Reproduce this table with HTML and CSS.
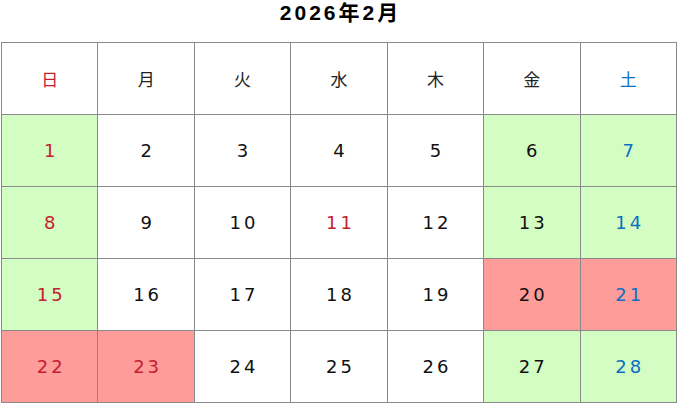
FILE: index.html
```html
<!DOCTYPE html>
<html lang="ja">
<head>
<meta charset="utf-8">
<link rel="stylesheet" href="styles.css">
</head>
<body>
<div class="cal">
  <h1 class="title">2026年2月</h1>
  <table class="grid">
    <thead>
      <tr>
        <th class="sun">日</th><th>月</th><th>火</th><th>水</th><th>木</th><th>金</th><th class="sat">土</th>
      </tr>
    </thead>
    <tbody>
      <tr>
        <td class="sun green">1</td><td>2</td><td>3</td><td>4</td><td>5</td><td class="green">6</td><td class="sat green">7</td>
      </tr>
      <tr>
        <td class="sun green">8</td><td>9</td><td>10</td><td class="sun">11</td><td>12</td><td class="green">13</td><td class="sat green">14</td>
      </tr>
      <tr>
        <td class="sun green">15</td><td>16</td><td>17</td><td>18</td><td>19</td><td class="red">20</td><td class="sat red">21</td>
      </tr>
      <tr>
        <td class="sun red">22</td><td class="sun red">23</td><td>24</td><td>25</td><td>26</td><td class="green">27</td><td class="sat green">28</td>
      </tr>
    </tbody>
  </table>
</div>
</body>
</html>
```

FILE: styles.css
```css
html, body {
  margin: 0;
  padding: 0;
  background: #fff;
}
.cal {
  padding: 0 0 0 1px;
  width: 676px;
}
.title {
  margin: 0;
  height: 42px;
  padding-top: 1px;
  box-sizing: border-box;
  text-align: center;
  font-family: "Liberation Sans", "Noto Sans CJK JP", sans-serif;
  font-weight: bold;
  font-size: 21px;
  line-height: 24px;
  letter-spacing: 3px;
  text-indent: 3px;
  color: #000;
}
.grid {
  width: 676px;
  border-collapse: collapse;
  table-layout: fixed;
}
.grid th, .grid td {
  border: 1px solid #8a8a8a;
  height: 71px;
  padding: 0;
  text-align: center;
  vertical-align: middle;
  color: #111;
}
.grid th {
  font-family: "Noto Sans CJK JP", sans-serif;
  font-weight: normal;
  font-size: 17px;
  color: #222;
}
.grid td {
  font-family: "DejaVu Sans", sans-serif;
  font-weight: normal;
  font-size: 18px;
  letter-spacing: 3px;
  text-indent: 3px;
}
.grid .sun { color: #c4202e; }
.grid .sat { color: #0b6fc2; }
.grid .green { background: #d3fdc2; }
.grid .red { background: #fe9c99; }
```
